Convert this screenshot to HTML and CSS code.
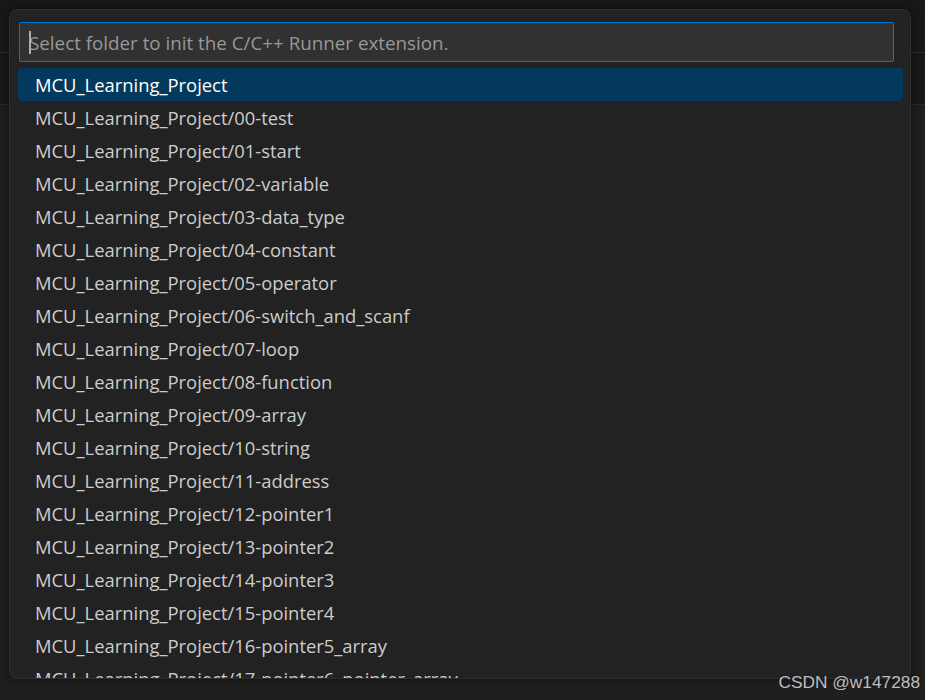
FILE: index.html
```html
<!DOCTYPE html>
<html lang="en">
<head>
<meta charset="UTF-8">
<title>Select folder</title>
<link rel="stylesheet" href="styles.css">
</head>
<body>
<!-- editor chrome behind the picker -->
<div class="titlebar"></div>
<div class="tabs"></div>
<div class="toolbar"></div>
<div class="editor"></div>

<!-- quick pick -->
<div class="quick-pick">
  <div class="input-box">
    <span class="caret"></span>
    <input type="text" placeholder="Select folder to init the C/C++ Runner extension.">
  </div>
  <ul class="pick-list">
    <li class="selected">MCU_Learning_Project</li>
    <li>MCU_Learning_Project/00-test</li>
    <li>MCU_Learning_Project/01-start</li>
    <li>MCU_Learning_Project/02-variable</li>
    <li>MCU_Learning_Project/03-data_type</li>
    <li>MCU_Learning_Project/04-constant</li>
    <li>MCU_Learning_Project/05-operator</li>
    <li>MCU_Learning_Project/06-switch_and_scanf</li>
    <li>MCU_Learning_Project/07-loop</li>
    <li>MCU_Learning_Project/08-function</li>
    <li>MCU_Learning_Project/09-array</li>
    <li>MCU_Learning_Project/10-string</li>
    <li>MCU_Learning_Project/11-address</li>
    <li>MCU_Learning_Project/12-pointer1</li>
    <li>MCU_Learning_Project/13-pointer2</li>
    <li>MCU_Learning_Project/14-pointer3</li>
    <li>MCU_Learning_Project/15-pointer4</li>
    <li>MCU_Learning_Project/16-pointer5_array</li>
    <li>MCU_Learning_Project/17-pointer6_pointer_array</li>
  </ul>
</div>

<div class="watermark">CSDN @w147288</div>
</body>
</html>
```

FILE: styles.css
```css
html, body {
  height: 100%;
}
body {
  margin: 0;
  background: #1f1f1f;
  font-family: "Open Sans", "Noto Sans", sans-serif;
  overflow: hidden;
}
.titlebar {
  height: 52px;
  background: #181818;
  border-bottom: 1px solid #2b2b2b;
}
.tabs {
  height: 51px;
  background: #181818;
  border-bottom: 1px solid #2b2b2b;
}
.toolbar {
  height: 62px;
  background: #1f1f1f;
  box-shadow: 0 3px 3px #000;
}
.editor {
  height: 530px;
  background: #1f1f1f;
}

.quick-pick {
  position: absolute;
  left: 9px;
  top: 9px;
  width: 900px;
  height: 668px;
  background: #222222;
  border: 1px solid #303030;
  border-radius: 8px;
  box-shadow: 0 0 8px rgba(0,0,0,0.6);
  overflow: hidden;
}
.input-box {
  position: relative;
  margin: 12px 16px 6px 9px;
  height: 38px;
  background: #313131;
  border: 1px solid #0078d4;
  border-radius: 2px;
}
.input-box input {
  width: 100%;
  height: 100%;
  box-sizing: border-box;
  padding: 1px 9px 0;
  border: none;
  outline: none;
  background: transparent;
  color: #cccccc;
  font-family: inherit;
  font-size: 18.8px;
}
.input-box input::placeholder {
  color: #989898;
}
.caret {
  position: absolute;
  left: 9px;
  top: 8px;
  width: 2px;
  height: 23px;
  background: #aeafad;
}
.pick-list {
  list-style: none;
  margin: 0 7px 0 8px;
  padding: 0;
}
.pick-list li {
  height: 33px;
  line-height: 33px;
  padding-left: 17px;
  color: #cccccc;
  font-size: 18.4px;
  white-space: nowrap;
  border-radius: 4px;
}
.pick-list li.selected {
  background: #04395e;
  color: #ffffff;
}

.watermark {
  position: absolute;
  right: 5px;
  top: 672px;
  color: #bdbdbd;
  font-family: "Liberation Sans", Arial, sans-serif;
  font-size: 17.3px;
  text-shadow: 0 0 2px #1f1f1f;
}
```
